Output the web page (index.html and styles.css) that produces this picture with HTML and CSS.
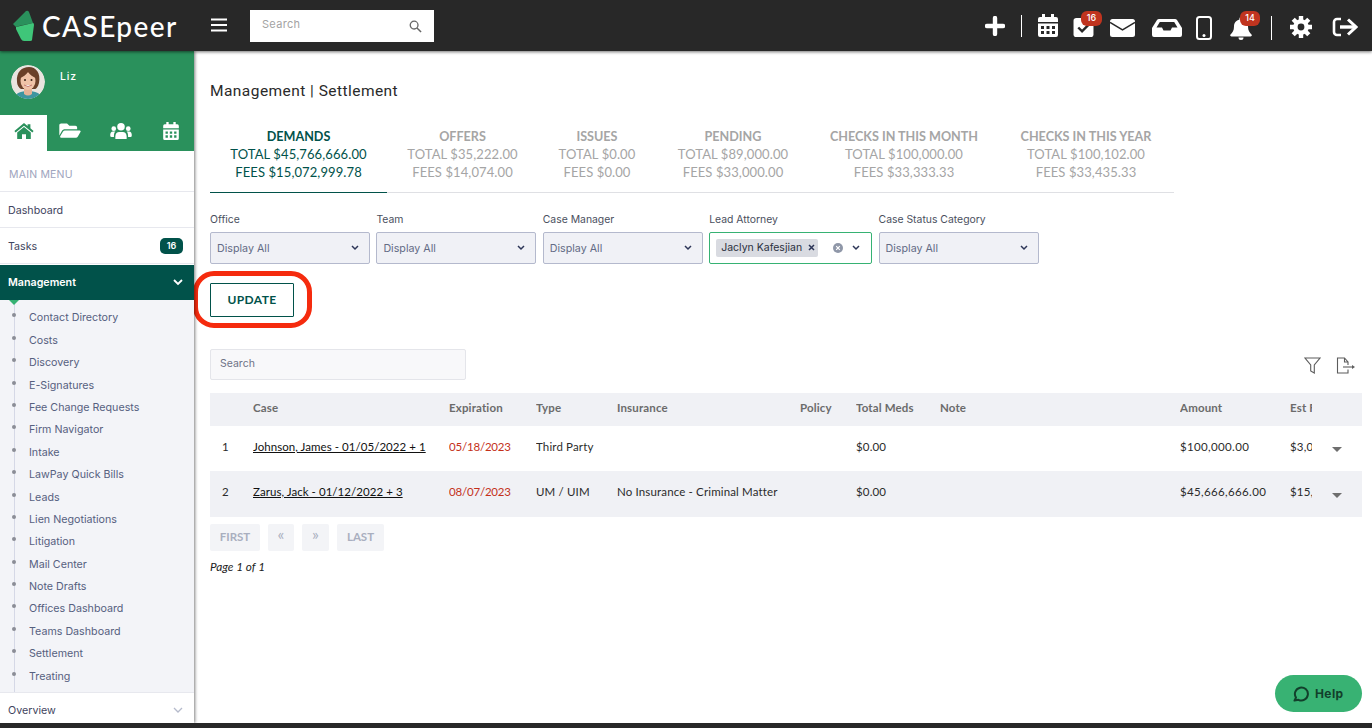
FILE: index.html
```html
<!DOCTYPE html>
<html lang="en">
<head>
<meta charset="utf-8">
<title>CASEpeer - Management | Settlement</title>
<link rel="stylesheet" href="styles.css">
</head>
<body>
<header class="topbar">
  <div class="brand">
    <svg class="logo" viewBox="0 0 24 32" width="24" height="32"><path fill="#2a915c" d="M1 14 14 1q2-1 3 1l4 11-14 3-3 1z"/><path fill="#3fc679" d="M4 17 21 13q1 0 1 2l-2 15q0 1-2 1h-6q-2 0-3-2L4 19z"/></svg>
    <span class="wordmark">CASEpeer</span>
  </div>
  <svg class="hamburger" viewBox="0 0 16 14" width="16" height="14"><path d="M0 1.500h16M0 7h16M0 12.500h16" stroke="#fff" stroke-width="2.200"/></svg>
  <div class="topsearch">
    <span>Search</span>
    <svg viewBox="0 0 14 14" width="13" height="13"><circle cx="5.500" cy="5.500" r="4.200" fill="none" stroke="#666" stroke-width="1.400"/><path d="M8.600 8.600 13 13" stroke="#666" stroke-width="1.600"/></svg>
  </div>
  <div class="tools">
    <svg class="t16" viewBox="0 0 20 20" width="20" height="20"><path d="M10 2v16M2 10h16" stroke="#fff" stroke-width="4.400" stroke-linecap="round"/></svg>
    <i class="vrule t15"></i>
    <svg class="t14" viewBox="0 0 20 23" width="20" height="23"><path fill="#fff" fill-rule="evenodd" d="M4 0h3v3h6V0h3v3h2a2 2 0 0 1 2 2v3H0V5a2 2 0 0 1 2-2h2zM0 9.500h20V21a2 2 0 0 1-2 2H2a2 2 0 0 1-2-2zM3 12v3h3v-3zm5.500 0v3h3v-3zm5.500 0v3h3v-3zM3 17v3h3v-3zm5.500 0v3h3v-3zm5.500 0v3h3v-3z"/></svg>
    <span class="withbadge ml15 t18">
      <svg viewBox="0 0 21 20" width="21" height="19"><rect width="21" height="20" rx="3" fill="#fff"/><path d="m5 10 4 4 8-8" fill="none" stroke="#282828" stroke-width="2.600"/></svg>
      <b class="badge tasksbadge">16</b>
    </span>
    <svg class="t19" viewBox="0 0 25 18" width="25" height="18"><rect width="25" height="18" rx="2.500" fill="#fff"/><path d="M0 3.500 12.500 11 25 3.500" fill="none" stroke="#282828" stroke-width="1.500"/></svg>
    <svg class="ml17 t19" viewBox="0 0 30 18" width="30" height="18"><path fill="#fff" fill-rule="evenodd" d="M7 0h16a2.500 2.500 0 0 1 2 1l5 8v7a2 2 0 0 1-2 2H2a2 2 0 0 1-2-2V9l5-8a2.500 2.500 0 0 1 2-1zM7.800 3 4.500 8.500H10l1.500 3h7l1.500-3h5.500L22.200 3z"/></svg>
    <svg class="ml14 t16" viewBox="0 0 16 24" width="16" height="24"><rect x="1" y="1" width="14" height="22" rx="2.500" fill="none" stroke="#fff" stroke-width="2"/><circle cx="8" cy="19.500" r="1.500" fill="#fff"/></svg>
    <span class="withbadge ml18 t17">
      <svg viewBox="0 0 22 23" width="22" height="23"><path fill="#fff" d="M11 0a2 2 0 0 1 1.500 2.500C16 3.300 18 6 18 9.500c0 4 1.500 6 3.500 8 .7.800.2 2-1 2h-19c-1.200 0-1.700-1.200-1-2 2-2 3.500-4 3.500-8C4 6 6 3.300 9.500 2.500A2 2 0 0 1 11 0zM8.500 20.500h5a2.500 2.500 0 0 1-5 0z"/></svg>
      <b class="badge bellbadge">14</b>
    </span>
    <i class="vrule ml19 t16 tall"></i>
    <svg class="ml18 t16" viewBox="0 0 22 22" width="22" height="22"><g stroke="#fff" stroke-width="4.400"><path d="M11 0v22M0 11h22M3.200 3.200l15.600 15.600M18.800 3.200 3.200 18.800"/></g><circle cx="11" cy="11" r="5.600" fill="#282828" stroke="#fff" stroke-width="4.400"/></svg>
    <svg class="ml20 t17" viewBox="0 0 26 20" width="26" height="20"><path d="M9 2H5a3 3 0 0 0-3 3v10a3 3 0 0 0 3 3h4" fill="none" stroke="#fff" stroke-width="2.600"/><path d="M8 10h15" stroke="#fff" stroke-width="3.400"/><path d="m16 2.500 8 7.500-8 7.500" fill="none" stroke="#fff" stroke-width="3"/></svg>
  </div>
</header>

<div class="shell">
  <aside class="sidebar">
    <div class="profile">
      <svg class="avatar" viewBox="0 0 34 34" width="34" height="34">
        <defs><clipPath id="round"><circle cx="17" cy="17" r="17"/></clipPath></defs>
        <g clip-path="url(#round)">
          <rect width="34" height="34" fill="#e9e4df"/>
          <path fill="#6a4029" d="M6 17C5 7 11 2 18 2s12 6 10 16c-1 4-3 6-4 6H10c-2-1-4-4-4-7z"/>
          <path fill="#3d95a0" d="M3 34c1-6 7-8 14-8s13 2 14 8z"/>
          <path fill="#e6b296" d="M13 23h8v6q-4 3-8 0z"/>
          <ellipse cx="17" cy="16" rx="7.500" ry="9" fill="#efc3a8"/>
          <path fill="#6a4029" d="M9 13c3-1 6-3 8-6 2 3 5 5 8 6l-1-7H11z"/>
          <path d="M13 20q4 3 8 0" fill="#fff" stroke="#b55a50" stroke-width=".8"/>
          <circle cx="14" cy="15" r="1" fill="#3a2418"/><circle cx="20.500" cy="15" r="1" fill="#3a2418"/>
        </g>
      </svg>
      <span class="username">Liz</span>
    </div>
    <nav class="sidetabs">
      <a class="sidetab current"><svg viewBox="0 0 24 20" width="20" height="16"><path fill="#2a915c" d="M12 0 0 10l1.500 2L12 3.300 22.500 12l1.500-2-4-3.300V1.500h-3.500v2.300z"/><path fill="#2a915c" d="M12 5 3.500 12v8h6v-6h5v6h6v-8z"/></svg></a>
      <a class="sidetab"><svg viewBox="0 0 576 512" width="22" height="19"><path fill="#fff" d="M572.694 292.093L500.27 416.248A63.997 63.997 0 0 1 444.989 448H45.025c-18.523 0-30.064-20.093-20.731-36.093l72.424-124.155A64 64 0 0 1 152 256h399.964c18.523 0 30.064 20.093 20.73 36.093zM152 224h328v-48c0-26.51-21.49-48-48-48H272l-64-64H48C21.49 64 0 85.49 0 112v278.046l69.077-118.418C86.214 242.250 117.989 224 152 224z"/></svg></a>
      <a class="sidetab people"><svg viewBox="0 0 23 17" width="22" height="16"><g fill="#fff"><circle cx="11.500" cy="4" r="4"/><circle cx="3.800" cy="6" r="2.500"/><circle cx="19.200" cy="6" r="2.500"/><path d="M5.500 17v-3c0-3 2-4.500 4-4.500h4c2 0 4 1.500 4 4.500v3zM0 13c0-2.500 1-4 3-4h2.500C4.500 10 4 11.500 4 13.500V15H1.500Q0 15 0 13zM23 13c0-2.500-1-4-3-4h-2.500c1 1 1.500 2.500 1.500 4.500V15h2.500q1.500 0 1.500-2z"/></g></svg></a>
      <a class="sidetab dates"><svg viewBox="0 0 20 23" width="16" height="18"><path fill="#fff" fill-rule="evenodd" d="M4 0h3v3h6V0h3v3h2a2 2 0 0 1 2 2v3H0V5a2 2 0 0 1 2-2h2zM0 9.500h20V21a2 2 0 0 1-2 2H2a2 2 0 0 1-2-2zM3 12v3h3v-3zm5.500 0v3h3v-3zm5.500 0v3h3v-3zM3 17v3h3v-3zm5.500 0v3h3v-3zm5.500 0v3h3v-3z"/></svg></a>
    </nav>
    <div class="menutitle">MAIN MENU</div>
    <a class="menuitem">Dashboard</a>
    <a class="menuitem">Tasks<b class="pill">16</b></a>
    <a class="menuitem active">Management<svg viewBox="0 0 10 7" width="10" height="7"><path d="m1 1 4 4 4-4" fill="none" stroke="#fff" stroke-width="1.800"/></svg></a>
    <ul class="submenu">
      <li>Contact Directory</li>
      <li>Costs</li>
      <li>Discovery</li>
      <li>E-Signatures</li>
      <li>Fee Change Requests</li>
      <li>Firm Navigator</li>
      <li>Intake</li>
      <li>LawPay Quick Bills</li>
      <li>Leads</li>
      <li>Lien Negotiations</li>
      <li>Litigation</li>
      <li>Mail Center</li>
      <li>Note Drafts</li>
      <li>Offices Dashboard</li>
      <li>Teams Dashboard</li>
      <li>Settlement</li>
      <li>Treating</li>
    </ul>
    <a class="menuitem overview">Overview<svg viewBox="0 0 10 7" width="10" height="7"><path d="m1 1 4 4 4-4" fill="none" stroke="#b5bacb" stroke-width="1.300"/></svg></a>
  </aside>

  <main class="content">
    <h1 class="pagetitle">Management | Settlement</h1>
    <div class="tabs">
      <div class="tab on"><b>DEMANDS</b><span>TOTAL $45,766,666.00</span><span>FEES $15,072,999.78</span></div>
      <div class="tab"><b>OFFERS</b><span>TOTAL $35,222.00</span><span>FEES $14,074.00</span></div>
      <div class="tab"><b>ISSUES</b><span>TOTAL $0.00</span><span>FEES $0.00</span></div>
      <div class="tab"><b>PENDING</b><span>TOTAL $89,000.00</span><span>FEES $33,000.00</span></div>
      <div class="tab"><b>CHECKS IN THIS MONTH</b><span>TOTAL $100,000.00</span><span>FEES $33,333.33</span></div>
      <div class="tab"><b>CHECKS IN THIS YEAR</b><span>TOTAL $100,102.00</span><span>FEES $33,435.33</span></div>
    </div>

    <div class="filters">
      <div class="field"><label>Office</label><div class="select">Display All<svg class="caret" viewBox="0 0 8 6" width="8" height="6"><path d="m1 1 3 3 3-3" fill="none" stroke="#2c3557" stroke-width="1.500"/></svg></div></div>
      <div class="field"><label>Team</label><div class="select">Display All<svg class="caret" viewBox="0 0 8 6" width="8" height="6"><path d="m1 1 3 3 3-3" fill="none" stroke="#2c3557" stroke-width="1.500"/></svg></div></div>
      <div class="field"><label>Case Manager</label><div class="select">Display All<svg class="caret" viewBox="0 0 8 6" width="8" height="6"><path d="m1 1 3 3 3-3" fill="none" stroke="#2c3557" stroke-width="1.500"/></svg></div></div>
      <div class="field wide"><label>Lead Attorney</label><div class="select focus"><span class="chip">Jaclyn Kafesjian<svg viewBox="0 0 7 7" width="7" height="7"><path d="m1 1 5 5M6 1 1 6" stroke="#2c3557" stroke-width="1.500"/></svg></span><svg class="clear" viewBox="0 0 10 10" width="10" height="10"><circle cx="5" cy="5" r="5" fill="#8f97a8"/><path d="m3.200 3.200 3.600 3.600M6.800 3.200 3.200 6.800" stroke="#fff" stroke-width="1.200"/></svg><svg class="caret" viewBox="0 0 8 6" width="8" height="6"><path d="m1 1 3 3 3-3" fill="none" stroke="#2c3557" stroke-width="1.500"/></svg></div></div>
      <div class="field"><label>Case Status Category</label><div class="select">Display All<svg class="caret" viewBox="0 0 8 6" width="8" height="6"><path d="m1 1 3 3 3-3" fill="none" stroke="#2c3557" stroke-width="1.500"/></svg></div></div>
    </div>

    <div class="updatewrap">
      <button class="update">UPDATE</button>
      <i class="ring"></i>
    </div>

    <div class="tabletools">
      <div class="tablesearch">Search</div>
      <div class="tableicons">
        <svg viewBox="0 0 17 17" width="17" height="17"><path d="M1 1h15l-5.700 7v8l-3.600-2V8z" fill="none" stroke="#5c5c5c" stroke-width="1.100"/></svg>
        <svg viewBox="0 0 19 17" width="19" height="17"><path d="M12 8V5L8.500 1H1.500v15H12v-3.500M8.500 1v4H12" fill="none" stroke="#5c5c5c" stroke-width="1.100"/><path d="M7 10h10" stroke="#5c5c5c" stroke-width="1.100"/><path d="m16 8 3 2-3 2z" fill="#5c5c5c"/></svg>
      </div>
    </div>

    <table class="grid">
      <colgroup><col class="c1"><col class="c2"><col class="c3"><col class="c4"><col class="c5"><col class="c6"><col class="c7"><col class="c8"><col class="c9"><col class="c10"><col></colgroup>
      <thead>
        <tr><th></th><th>Case</th><th>Expiration</th><th>Type</th><th>Insurance</th><th>Policy</th><th>Total Meds</th><th>Note</th><th>Amount</th><th>Est Fee</th><th></th></tr>
      </thead>
      <tbody>
        <tr class="r1"><td class="num">1</td><td><a>Johnson, James - 01/05/2022 + 1</a></td><td class="late">05/18/2023</td><td>Third Party</td><td></td><td></td><td>$0.00</td><td></td><td class="amt">$100,000.00</td><td>$3,000.00</td><td class="arrow"><i class="down"></i></td></tr>
        <tr class="r2"><td class="num">2</td><td><a>Zarus, Jack - 01/12/2022 + 3</a></td><td class="late">08/07/2023</td><td>UM / UIM</td><td>No Insurance - Criminal Matter</td><td></td><td>$0.00</td><td></td><td class="amt">$45,666,666.00</td><td>$15,072,999.78</td><td class="arrow"><i class="down"></i></td></tr>
      </tbody>
    </table>

    <div class="pager">
      <span class="pg first">FIRST</span><span class="pg prev">«</span><span class="pg next">»</span><span class="pg last">LAST</span>
    </div>
    <p class="pagecount">Page 1 of 1</p>

    <button class="help"><svg viewBox="0 0 17 17" width="17" height="17"><path d="M2.500 15.500 4 12.600A6.500 6.500 0 1 1 6.500 14.800z" fill="none" stroke="#123f2b" stroke-width="2" stroke-linejoin="round"/></svg>Help</button>
  </main>
</div>
<div class="footbar"></div>
</body>
</html>
```

FILE: styles.css
```css
* { box-sizing: border-box; }
html, body { margin: 0; height: 100%; }
body {
  width: 1372px; height: 728px; overflow: hidden;
  display: flex; flex-direction: column;
  font-family: "Lato", "Liberation Sans", sans-serif;
  background: #fff; color: #2b2b2b;
}
svg { display: block; flex: none; }

/* top bar */
.topbar {
  height: 51px; flex: none; display: flex; align-items: center;
  background: #282828; position: relative; z-index: 3;
  box-shadow: 0 1px 3px rgba(0,0,0,.55);
}
.brand { width: 211px; padding-left: 12px; display: flex; align-items: center; gap: 6px; }
.wordmark { font: 500 28px/1 "Lato", sans-serif; color: #fff; letter-spacing: 1.400px; }
.hamburger { margin: -1px 23px 0 0; }
.topsearch {
  width: 184px; height: 32px; background: #fff; display: flex; align-items: center;
  justify-content: space-between; padding: 0 12px; font: 11px "Inter", sans-serif;
  color: #a3a3a3; letter-spacing: .3px;
}
.topsearch span { margin-top: -4px; }
.topsearch svg { margin-top: 1px; }
.tools { margin-left: auto; align-self: flex-start; padding-right: 14px; display: flex; align-items: flex-start; gap: 16px; }
.vrule { width: 1px; height: 22px; background: #fff; display: block; }
.vrule.tall { height: 24px; }
.t14 { margin-top: 14px; } .t15 { margin-top: 15px; } .t16 { margin-top: 16px; } .t17 { margin-top: 17px; }
.t18 { margin-top: 18px; } .t19 { margin-top: 19px; }
.ml14 { margin-left: -2px; } .ml15 { margin-left: -1px; } .ml17 { margin-left: 1px; }
.ml18 { margin-left: 2px; } .ml19 { margin-left: 3px; } .ml20 { margin-left: 4px; }
.withbadge { position: relative; display: block; }
.badge {
  position: absolute; height: 15px; border-radius: 6px; background: #c0341f; color: #fff;
  font: 500 9px/14px "Inter", sans-serif; text-align: center; width: 21px;
}
.tasksbadge { left: 8px; top: -7px; }
.bellbadge { left: 10px; top: -6px; width: 20px; }

/* shell */
.shell { flex: 1; min-height: 0; display: flex; }
.footbar { height: 5px; flex: none; background: #282828; position: relative; z-index: 3; }

/* sidebar */
.sidebar {
  width: 194px; flex: none; display: flex; flex-direction: column; background: #fff;
  box-shadow: 1px 0 3px rgba(0,0,0,.5); position: relative; z-index: 2;
}
.profile { height: 64px; background: #2a915c; display: flex; padding: 14px 0 0 11px; flex: none; }
.username { color: #fff; font: 500 10.500px/1 "Inter", sans-serif; margin: 7px 0 0 15px; letter-spacing: .8px; }
.avatar { border-radius: 50%; }
.sidetabs { display: flex; height: 36px; background: #2a915c; flex: none; }
.sidetab { flex: 1; display: flex; align-items: center; justify-content: center; padding-bottom: 5px; }
.sidetab.current { background: #fff; flex: none; width: 47px; }
.sidetab.people { padding-left: 5px; }
.sidetab.dates { padding-left: 3px; }
.menutitle {
  height: 41px; flex: none; padding: 19px 9px 0; font: 10.500px/1 "Inter", sans-serif; color: #9ea4bd;
  border-bottom: 1px solid #e7e8ee; letter-spacing: .2px;
}
.menuitem {
  height: 36px; flex: none; display: flex; align-items: center; justify-content: space-between;
  padding: 1px 11px 0 8px; font: 10.700px "Inter", sans-serif; color: #3f4560; border-bottom: 1px solid #e7e8ee;
}
.pill {
  width: 23px; height: 16px; border-radius: 5px; background: #01524a; color: #fff;
  font: 600 9px/15px "Inter", sans-serif; text-align: center;
}
.menuitem.active { background: #01524a; color: #fff; font-weight: 600; height: 35px; border: 0; position: relative; margin-top: 1px; padding: 0 11px 1px 8px; }
.menuitem.active::after {
  content: ""; position: absolute; left: 9px; top: 35px; z-index: 1;
  border: 5px solid transparent; border-top: 5px solid #36b273; border-bottom: 0;
}
.submenu {
  list-style: none; margin: 0; height: 393px; flex: none; padding: 7.400px 0 0 29px; background: #f3f4f8;
  position: relative; border-bottom: 1px solid #e7e8ee;
}
.submenu::before { content: ""; position: absolute; left: 14px; top: 0; bottom: 0; width: 1px; background: #d5d8e6; }
.submenu li {
  height: 22.400px; font: 10.700px/22.400px "Inter", sans-serif; color: #56607f; position: relative;
}
.submenu li::before {
  content: ""; position: absolute; left: -17px; top: 6px; width: 4px; height: 4px; border-radius: 50%; background: #8b8d96;
}
.menuitem.overview { height: 30px; border: 0; padding-top: 4px; }

/* content */
.content { flex: 1; min-width: 0; padding: 0 10px 0 16px; position: relative; }
.pagetitle { margin: 31px 0 0; font: 400 15.500px/18px "Roboto", sans-serif; color: #2a2a2a; letter-spacing: .45px; }
.tabs {
  display: grid; grid-template-columns: 177px 151px 118px 154px 188px 176px;
  width: 964px; margin-top: 28px; border-bottom: 1px solid #dfe0e4;
}
.tab {
  padding: 0 0 11px; display: flex; flex-direction: column; align-items: center;
  font: 13px/18px "Lato", sans-serif; letter-spacing: .1px; color: #a5a5a5; margin-bottom: -1px; border-bottom: 1px solid transparent;
}
.tab b { font-weight: 700; font-size: 12.600px; line-height: 17px; letter-spacing: 0; }
.tab.on { color: #01524a; border-bottom-color: #01524a; }

.filters { display: flex; gap: 6.400px; margin-top: 20px; }
.field { width: 160px; }
.field.wide { width: 163px; }
.field label { display: block; height: 19px; font: 10.400px/14px "Inter", sans-serif; color: #4a4f5e; }
.select {
  height: 32px; display: flex; align-items: center; padding: 0 10px 0 6px; background: #f0f1f6;
  border: 1px solid #b4b9cd; border-radius: 2px; font: 10.700px "Inter", sans-serif; color: #636b85;
}
.select .caret { margin-left: auto; }
.select.focus { background: #fff; border-color: #36b273; padding-right: 11px; }
.chip {
  display: flex; align-items: center; gap: 6px; height: 18px; padding: 0 3px 0 5px; background: #d9dbe1;
  border-radius: 2px; color: #2b3040; margin-top: -1px; white-space: nowrap; font-size: 10.500px;
}
.clear { margin-left: 15px; }

.updatewrap { position: relative; width: 84px; height: 34px; margin-top: 19px; }
.update {
  display: block; width: 84px; height: 34px; padding: 0 0 1px; background: #fff; border: 1px solid #01524a; border-radius: 1px;
  color: #01524a; font: 700 12px/1 "Lato", sans-serif; letter-spacing: .4px;
}
.ring {
  position: absolute; left: -17px; right: -18px; top: -12px; bottom: -11px;
  border: 5px solid #f52b0e; border-radius: 21px; pointer-events: none;
}

.tabletools { display: flex; justify-content: space-between; align-items: flex-start; margin-top: 32px; }
.tablesearch {
  width: 256px; height: 31px; padding: 0 9px; background: #f8f8fa; border: 1px solid #e4e5ea; border-radius: 2px;
  font: 10.500px/27px "Inter", sans-serif; color: #6e7387;
}
.tableicons { display: flex; gap: 15px; padding: 8px 7px 0 0; }

.grid { width: 1152px; table-layout: fixed; border-collapse: collapse; margin-top: 13px; font: 11.500px "Lato", sans-serif; letter-spacing: .15px; color: #2b2b2b; }
.c1 { width: 43px; } .c2 { width: 196px; } .c3 { width: 87px; } .c4 { width: 81px; } .c5 { width: 183px; }
.c6 { width: 56px; } .c7 { width: 84px; } .c8 { width: 240px; } .c9 { width: 110px; } .c10 { width: 22px; }
.grid th, .grid td { padding: 0 0 4px; text-align: left; white-space: nowrap; overflow: hidden; }
.grid thead tr { height: 33px; background: #f0f1f5; }
.grid th { font-weight: 700; color: #6b6b6b; }
.r1 { height: 45px; }
.r2 { height: 46px; background: #f0f1f5; }
.grid .r2 td { padding-bottom: 5px; }
.grid td.num { padding-left: 12px; }
.grid a { color: #111; text-decoration: underline; letter-spacing: .05px; }
.grid .late { color: #c4301a; letter-spacing: -.2px; }
.grid .amt { letter-spacing: .35px; }
.grid tr td.arrow { padding: 0; }
.down { display: block; margin: 2px 0 0 20px; width: 0; border: 5px solid transparent; border-top: 5px solid #6e6e6e; border-bottom: 0; }

.pager { display: flex; margin-top: 7px; font: 700 11.500px "Lato", sans-serif; color: #a9afbf; }
.pg { height: 27px; line-height: 26px; text-align: center; background: #f3f4f7; border-radius: 2px; margin-right: 8px; }
.first { width: 50px; } .prev { width: 26px; } .next { width: 27px; } .last { width: 47px; }
.prev, .next { font-size: 16px; font-weight: 400; line-height: 20px; }
.pagecount { margin: 9px 0 0; font: italic 11.800px/14px "Lato", sans-serif; color: #222; }

.help {
  position: absolute; right: 10px; bottom: 11px; width: 87px; height: 37px; padding: 0 0 0 17px; border: 0; border-radius: 19px;
  background: #38b273; color: #123f2b; display: flex; align-items: center; gap: 6px;
  font: 700 12px "Inter", sans-serif; letter-spacing: .4px;
}
```
